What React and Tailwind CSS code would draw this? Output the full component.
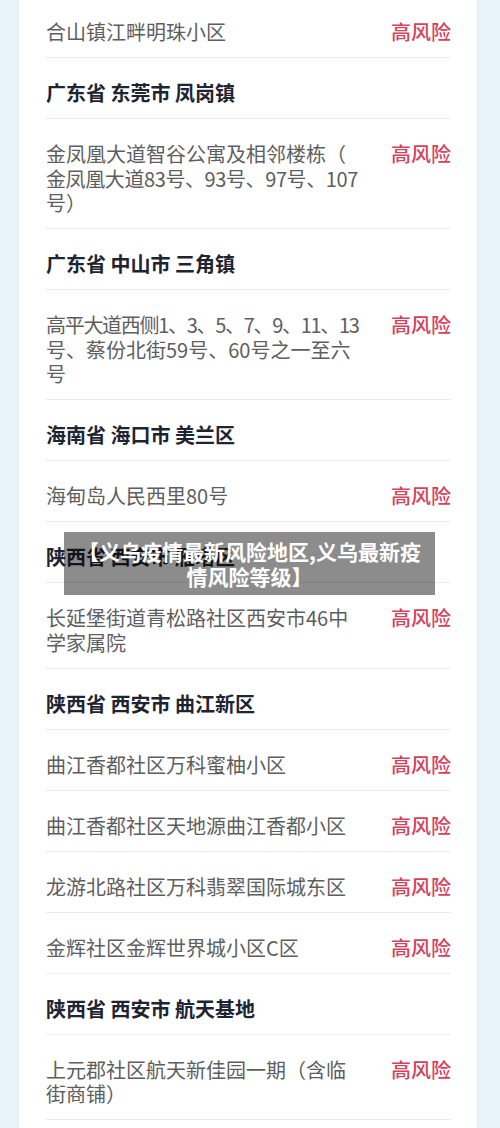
import React from 'react';

const rows = [
  { type: 'item', lines: ['合山镇江畔明珠小区'], first: true },
  { type: 'head', text: '广东省 东莞市 凤岗镇' },
  { type: 'item', lines: ['金凤凰大道智谷公寓及相邻楼栋（', '金凤凰大道83号、93号、97号、107', '号）'], tight: [false, true, false] },
  { type: 'head', text: '广东省 中山市 三角镇' },
  { type: 'item', lines: ['高平大道西侧1、3、5、7、9、11、13', '号、蔡份北街59号、60号之一至六', '号'], tight: [true, false, false], squeeze: true },
  { type: 'head', text: '海南省 海口市 美兰区' },
  { type: 'item', lines: ['海甸岛人民西里80号'] },
  { type: 'head', text: '陕西省 西安市 雁塔区' },
  { type: 'item', lines: ['长延堡街道青松路社区西安市46中', '学家属院'] },
  { type: 'head', text: '陕西省 西安市 曲江新区' },
  { type: 'item', lines: ['曲江香都社区万科蜜柚小区'] },
  { type: 'item', lines: ['曲江香都社区天地源曲江香都小区'] },
  { type: 'item', lines: ['龙游北路社区万科翡翠国际城东区'] },
  { type: 'item', lines: ['金辉社区金辉世界城小区C区'] },
  { type: 'head', text: '陕西省 西安市 航天基地' },
  { type: 'item', lines: ['上元郡社区航天新佳园一期（含临', '街商铺）'] },
];

const font = { fontFamily: '"Noto Sans CJK SC", "Noto Sans", sans-serif' };

const Row = ({ row }) => {
  const pad = row.first ? 'pt-[20px]' : 'pt-[23px]';
  if (row.type === 'head') {
    return (
      <div className={`${pad} pb-[12.5px] border-b border-[#ececec]`}>
        <p className="text-[20px] leading-[24.5px] font-bold text-[#1e2430] whitespace-nowrap">{row.text}</p>
      </div>
    );
  }
  return (
    <div className={`${pad} pb-[12.5px] border-b border-[#ececec] flex items-start justify-between`}>
      <div className="text-[20px] leading-[24.5px] text-[#5e5e5e] whitespace-nowrap">
        {row.lines.map((line, i) => {
          const tight = row.tight && row.tight[i];
          const cls = tight ? (row.squeeze ? 'tracking-[-1.3px]' : 'tracking-[-0.4px]') : '';
          return (
            <div key={i} className={cls}>
              {line}
            </div>
          );
        })}
      </div>
      <span className="text-[20px] leading-[24.5px] font-medium text-[#d5425c] whitespace-nowrap">高风险</span>
    </div>
  );
};

export default function App() {
  return (
    <div className="relative w-[500px] h-[1128px] overflow-hidden bg-[#e9f3fa]" style={font}>
      <div className="ml-[18px] w-[460px] h-full bg-white border-x border-[#e3edf5] pl-[27px] pr-[26px]">
        {rows.map((row, i) => (
          <Row key={i} row={row} />
        ))}
      </div>

      {/* title overlay */}
      <div className="absolute left-[64px] top-[532px] w-[371px] h-[63px] bg-black/45 flex items-center justify-center">
        <p className="text-[21px] leading-[25px] font-bold text-white text-center whitespace-nowrap">
          【义乌疫情最新风险地区,义乌最新疫
          <br />
          情风险等级】
        </p>
      </div>
    </div>
  );
}
